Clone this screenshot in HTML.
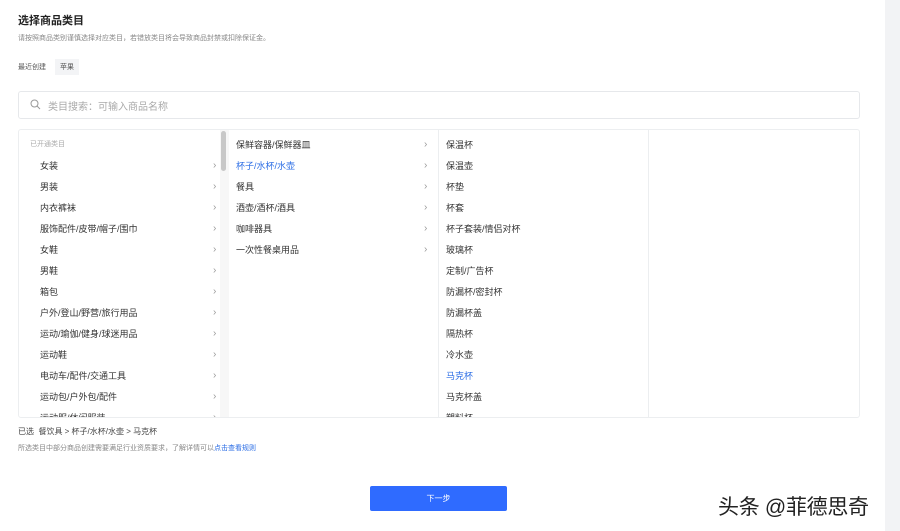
<!DOCTYPE html><html><head><meta charset="utf-8"><style>
*{margin:0;padding:0;box-sizing:border-box}
body{width:900px;height:531px;background:#fff;font-family:"Liberation Sans","Noto Sans CJK SC",sans-serif;color:#333;position:relative;overflow:hidden}
.a{position:absolute;white-space:nowrap}
.r{position:absolute;font-size:9px;color:#333;line-height:12px}
.ar{position:absolute;font-size:10px;color:#999;line-height:12px}
</style></head><body>
<div class="a" style="left:885px;top:0;width:15px;height:531px;background:#f2f3f5"></div>
<div class="a" style="left:18px;top:12px;font-size:11px;font-weight:bold;color:#222">选择商品类目</div>
<div class="a" style="left:18px;top:33px;font-size:7px;color:#888">请按照商品类别谨慎选择对应类目，若错放类目将会导致商品封禁或扣除保证金。</div>
<div class="a" style="left:18px;top:62px;font-size:7px;color:#555">最近创建</div>
<div class="a" style="left:55px;top:59px;font-size:7px;color:#555;background:#f3f4f6;padding:3px 5px">苹果</div>
<div class="a" style="left:18px;top:91px;width:842px;height:28px;border:1px solid #e6e8eb;border-radius:3px"></div>
<svg class="a" style="left:30px;top:99px" width="11" height="11" viewBox="0 0 11 11"><circle cx="4.5" cy="4.5" r="3.5" fill="none" stroke="#999" stroke-width="1"/><path d="M7 7l3 3" stroke="#999" stroke-width="1"/></svg>
<div class="a" style="left:48px;top:98px;font-size:10px;color:#aaa">类目搜索：可输入商品名称</div>
<div class="a" style="left:18px;top:129px;width:842px;height:289px;border:1px solid #eceef0;border-radius:3px;overflow:hidden">
<div id="c1"></div>
</div>
<div class="a" style="left:220px;top:130px;width:9px;height:287px;background:#f7f7f7"></div>
<div class="a" style="left:221px;top:131px;width:5px;height:40px;background:#c8c8c8;border-radius:3px"></div>
<div class="a" style="left:438px;top:130px;width:1px;height:287px;background:#eceef0"></div>
<div class="a" style="left:648px;top:130px;width:1px;height:287px;background:#eceef0"></div>
<div class="a" style="left:30px;top:139px;font-size:7px;color:#aaa">已开通类目</div>
<div class="a" style="left:18px;top:426px;font-size:8px;color:#444">已选 &nbsp;餐饮具 &gt; 杯子/水杯/水壶 &gt; 马克杯</div>
<div class="a" style="left:18px;top:443px;font-size:7px;color:#888">所选类目中部分商品创建需要满足行业资质要求，了解详情可以<span style="color:#2b6de5">点击查看规则</span></div>
<div class="a" style="left:370px;top:486px;width:137px;height:25px;background:#2f6bff;border-radius:2px;color:#fff;font-size:8px;text-align:center;line-height:25px">下一步</div>
<div class="a" style="left:718px;top:491px;font-size:21px;color:#222;letter-spacing:-0.3px">头条 @菲德思奇</div>
<script>
var c1=["女装","男装","内衣裤袜","服饰配件/皮带/帽子/围巾","女鞋","男鞋","箱包","户外/登山/野营/旅行用品","运动/瑜伽/健身/球迷用品","运动鞋","电动车/配件/交通工具","运动包/户外包/配件","运动服/休闲服装"];
var c2=["保鲜容器/保鲜器皿","杯子/水杯/水壶","餐具","酒壶/酒杯/酒具","咖啡器具","一次性餐桌用品"];
var c3=["保温杯","保温壶","杯垫","杯套","杯子套装/情侣对杯","玻璃杯","定制/广告杯","防漏杯/密封杯","防漏杯盖","隔热杯","冷水壶","马克杯","马克杯盖","塑料杯"];
var h="",ox=19,oy=130;
c1.forEach(function(t,i){var y=160+i*21;h+='<div class="r" style="left:'+(40-ox)+'px;top:'+(y-oy)+'px">'+t+'</div><div class="ar" style="left:'+(213-ox)+'px;top:'+(y-oy)+'px">›</div>';});
c2.forEach(function(t,i){var y=139+i*21;h+='<div class="r" style="left:'+(236-ox)+'px;top:'+(y-oy)+'px;'+(i==1?'color:#2b6de5':'')+'">'+t+'</div><div class="ar" style="left:'+(424-ox)+'px;top:'+(y-oy)+'px">›</div>';});
c3.forEach(function(t,i){var y=139+i*21;h+='<div class="r" style="left:'+(446-ox)+'px;top:'+(y-oy)+'px;'+(i==11?'color:#2b6de5':'')+'">'+t+'</div>';});
document.getElementById("c1").outerHTML=h;
</script>
</body></html>
